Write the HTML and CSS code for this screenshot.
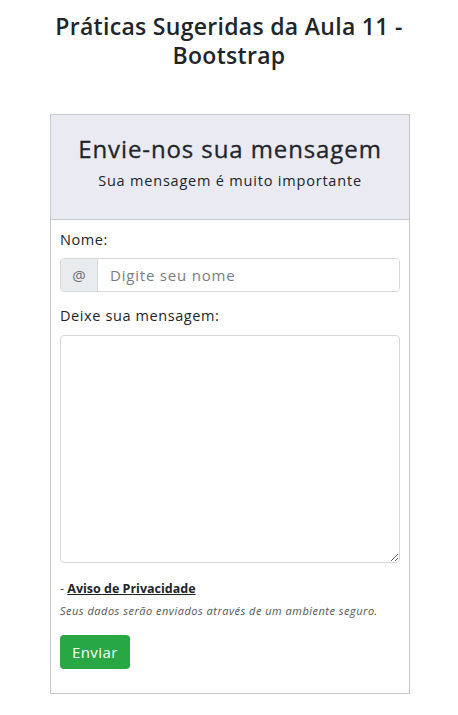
FILE: index.html
```html
<!DOCTYPE html>
<html lang="pt-BR">
<head>
<meta charset="utf-8">
<title>Práticas Sugeridas da Aula 11 - Bootstrap</title>
<link rel="stylesheet" href="styles.css">
</head>
<body>
<h1 class="page-title">Práticas Sugeridas da Aula 11 -<br>Bootstrap</h1>
<div class="card">
  <div class="card-header">
    <h2 class="card-title">Envie-nos sua mensagem</h2>
    <p class="card-sub">Sua mensagem é muito importante</p>
  </div>
  <form class="card-body">
    <label class="label">Nome:</label>
    <div class="input-group">
      <span class="addon">@</span>
      <input class="input" type="text" placeholder="Digite seu nome">
    </div>
    <label class="label label-msg">Deixe sua mensagem:</label>
    <textarea class="textarea"></textarea>
    <p class="privacy">- <a href="#" class="privacy-link">Aviso de Privacidade</a></p>
    <p class="note">Seus dados serão enviados através de um ambiente seguro.</p>
    <button type="button" class="btn">Enviar</button>
  </form>
</div>
</body>
</html>
```
FILE: styles.css
```css
* { box-sizing: border-box; }
body {
  margin: 0;
  font-family: "Open Sans", "DejaVu Sans", sans-serif;
  color: #212529;
  background: #fff;
}
.page-title {
  margin: 12px 0 0;
  text-align: center;
  font-size: 23px;
  font-weight: 600;
  line-height: 29px;
  letter-spacing: 0.3px;
  color: #212529;
}
.card {
  width: 360px;
  margin: 44px 0 0 50px;
  border: 1px solid #c6c6cf;
  background: #fff;
}
.card-header {
  background: #e9eaf2;
  border-bottom: 1px solid #c6c6cf;
  height: 105px;
  text-align: center;
  padding-top: 18px;
}
.card-title {
  margin: 0;
  font-size: 24px;
  font-weight: 500;
  line-height: 32px;
  letter-spacing: 0.9px;
  -webkit-text-stroke: 0.3px #212529;
}
.card-sub {
  margin: 6px 0 0;
  font-size: 14.5px;
  line-height: 20px;
  letter-spacing: 0.8px;
}
.card-body {
  display: flex;
  flex-direction: column;
  align-items: flex-start;
  padding: 10px 9px 24px 9px;
}
.label {
  font-size: 14.5px;
  line-height: 20px;
  margin-bottom: 8px;
  letter-spacing: 0.6px;
}
.label-msg { margin-top: 14px; margin-bottom: 9px; }
.input-group {
  display: flex;
  width: 100%;
  height: 34px;
  border: 1px solid #d6d8dc;
  border-radius: 4px;
  overflow: hidden;
}
.addon {
  width: 37px;
  background: #e9ecef;
  border-right: 1px solid #d6d8dc;
  display: flex;
  align-items: center;
  justify-content: center;
  color: #6c6c74;
  font-size: 15px;
}
.input {
  flex: 1;
  border: 0;
  padding: 0 12px;
  font-family: inherit;
  font-size: 15px;
  letter-spacing: 0.8px;
  outline: none;
}
.input::placeholder { color: #7c7c84; }
.textarea {
  width: 100%;
  height: 228px;
  border: 1px solid #d6d8dc;
  border-radius: 4px;
  resize: vertical;
  font-family: inherit;
}
.privacy {
  margin: 17px 0 0;
  font-size: 12.5px;
  line-height: 18px;
  color: #555;
}
.privacy-link {
  color: #212529;
  font-weight: 700;
  text-decoration: underline;
}
.note {
  margin: 5px 0 0;
  font-size: 11px;
  font-style: italic;
  line-height: 15px;
  letter-spacing: 0.5px;
  color: #555;
}
.btn {
  margin-top: 17px;
  height: 34px;
  padding: 0 12px;
  background: #28a745;
  border: 0;
  border-radius: 4px;
  color: #fff;
  font-family: inherit;
  font-size: 15px;
  letter-spacing: 0.4px;
}
```
